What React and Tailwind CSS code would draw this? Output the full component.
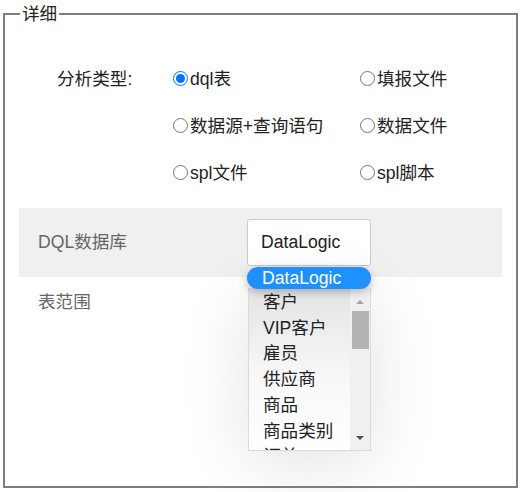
export default function App() {
  const items = ["客户", "VIP客户", "雇员", "供应商", "商品", "商品类别", "订单"];
  return (
    <div className="relative w-[522px] h-[492px] bg-white pl-[3px] pt-[4px] font-['Liberation_Sans','Noto_Sans_CJK_SC',sans-serif] text-[17.6px] text-[#222] overflow-hidden">
      <fieldset className="m-0 p-0 w-[515px] h-[484px] border-2 border-[#7f7f7f]">
        <legend className="ml-[15px] px-[2px] leading-[20px]">详细</legend>

        <div className="mt-[32px]">
          <div className="flex items-center h-[47px]">
            <div className="w-[168px] pl-[52px]">分析类型:</div>
            <label className="w-[187px] flex items-center">
              <input type="radio" name="t" defaultChecked className="m-0 w-[15px] h-[15px] -translate-y-[1px]" />
              <span className="ml-[2px]">dql表</span>
            </label>
            <label className="flex items-center">
              <input type="radio" name="t" className="m-0 w-[15px] h-[15px] -translate-y-[1px]" />
              <span className="ml-[2px]">填报文件</span>
            </label>
          </div>
          <div className="flex items-center h-[47px]">
            <div className="w-[168px]"></div>
            <label className="w-[187px] flex items-center">
              <input type="radio" name="t" className="m-0 w-[15px] h-[15px] -translate-y-[1px]" />
              <span className="ml-[2px]">数据源+查询语句</span>
            </label>
            <label className="flex items-center">
              <input type="radio" name="t" className="m-0 w-[15px] h-[15px] -translate-y-[1px]" />
              <span className="ml-[2px]">数据文件</span>
            </label>
          </div>
          <div className="flex items-center h-[47px]">
            <div className="w-[168px]"></div>
            <label className="w-[187px] flex items-center">
              <input type="radio" name="t" className="m-0 w-[15px] h-[15px] -translate-y-[1px]" />
              <span className="ml-[2px]">spl文件</span>
            </label>
            <label className="flex items-center">
              <input type="radio" name="t" className="m-0 w-[15px] h-[15px] -translate-y-[1px]" />
              <span className="ml-[2px]">spl脚本</span>
            </label>
          </div>
        </div>

        <div className="mt-[10.5px] ml-[14px] w-[483px] h-[69px] bg-[#f0f0f0] flex items-center">
          <div className="w-[228px] pl-[19px] text-[#666]">DQL数据库</div>
          <div className="w-[124px] h-[47px] bg-white border border-[#c9c9c9] rounded-[3px] flex items-center pl-[13px]">
            DataLogic
          </div>
        </div>

        <div className="h-[48px] flex items-center pl-[33px] pt-[3px] text-[#666]">表范围</div>
      </fieldset>

      <div className="absolute left-[247px] top-[267px] w-[124px]">
        <div className="relative z-10 h-[22px] rounded-[11px] bg-[#1e90ff] text-white pl-[15px] leading-[22px] shadow-[0_3px_8px_rgba(0,0,0,0.25)]">
          DataLogic
        </div>
        <div className="ml-[1px] -mt-[1px] w-[123px] h-[163px] flex border border-t-0 border-[#dadada] bg-linear-to-b from-[#e3e3e3] via-[#f8f8f8] via-[55%] to-white shadow-[0_10px_70px_rgba(0,0,0,0.12)] overflow-hidden">
          <div className="flex-1 pl-[14px] pt-[2px] overflow-hidden">
            {items.map((t) => (
              <div key={t} className="leading-[25.7px] whitespace-nowrap">{t}</div>
            ))}
          </div>
          <div className="w-[20px] bg-[#f0f0f0] flex flex-col items-center">
            <div className="mt-[12px] w-0 h-0 border-x-[4px] border-x-transparent border-b-[4px] border-b-[#a3a3a3]"></div>
            <div className="mt-[7px] w-[17px] h-[38px] bg-[#b3b3b3]"></div>
            <div className="flex-1"></div>
            <div className="mb-[10px] w-0 h-0 border-x-[4px] border-x-transparent border-t-[4px] border-t-[#505050]"></div>
          </div>
        </div>
      </div>
    </div>
  );
}
